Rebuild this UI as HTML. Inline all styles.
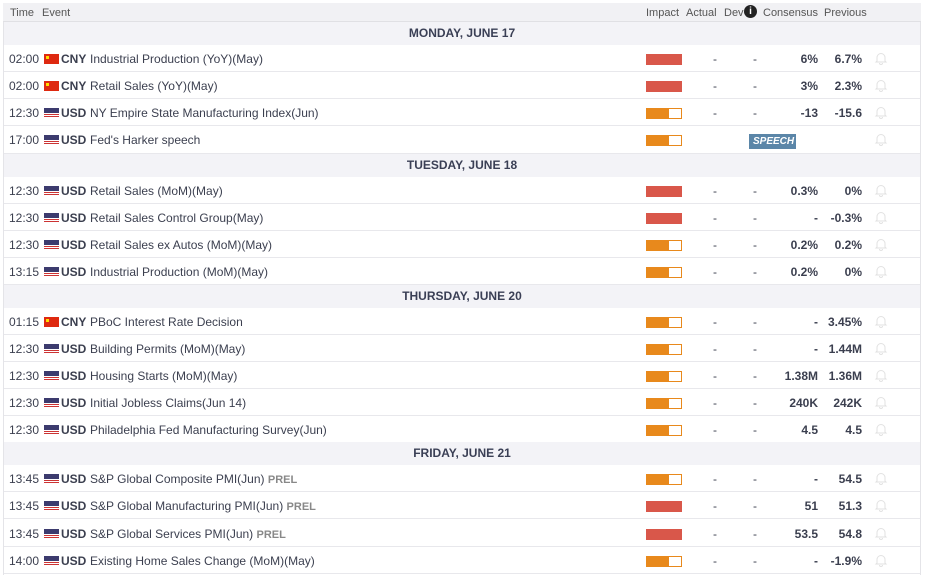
<!DOCTYPE html>
<html><head><meta charset="utf-8"><style>
*{margin:0;padding:0;box-sizing:border-box}
body{width:925px;height:575px;background:#fff;font-family:"Liberation Sans",Arial,sans-serif;font-size:12px;color:#3b3f4f;position:relative;overflow:hidden}
.wrap{position:absolute;left:3px;top:3px;width:918px;height:572px;border-left:1px solid #e4e4e8;border-right:1px solid #e4e4e8}
.hd{position:absolute;left:3px;top:3px;width:918px;height:19px;background:#f1f1f4;border-bottom:1px solid #e0e0e4;color:#555;font-size:11px}
.hd span{position:absolute;top:4px}
.day{position:absolute;left:4px;width:916px;height:23px;background:#f3f3f7;font-weight:bold;text-align:center;line-height:23px;color:#3a3f55;font-size:12px}
.row{position:absolute;left:4px;width:916px;height:27px;border-bottom:1px solid #e8e8ec}
.row span{position:absolute;top:7px;white-space:nowrap}
.t{left:5px}
.f{left:40px;top:9px!important;width:15px;height:10px}
.cn{background:#de2910}
.cn:after{content:"";position:absolute;left:2px;top:2px;width:3px;height:3px;background:#ffde00}
.us{background:repeating-linear-gradient(#c33 0 1px,#fff 1px 2px)}
.us:after{content:"";position:absolute;left:0;top:0;width:15px;height:5px;background:#3c3b6e}
.cur{left:57px;font-weight:bold}
.ev{left:86px}
.prel{color:#888;font-weight:bold;font-size:11px}
.imp{left:642px;top:9px!important;width:36px;height:11px}
.hi{background:#d9574a}
.md{background:linear-gradient(90deg,#e8891c 0 22px,#fff 22px);border:1px solid #e8891c}
.a{left:709px}.d{left:749px}
.c{right:102px;font-weight:bold;text-align:right}
.p{right:58px;font-weight:bold;text-align:right}
.b{left:870px;top:6px!important}
.sp{position:absolute;left:745px;top:8px!important;background:#5b86a8;color:#fff;font-weight:bold;font-style:italic;font-size:10px;padding:2px 4px;width:47px;height:15px}
</style></head><body>
<div class="wrap"></div>
<div class="hd"><span style="left:7px">Time</span><span style="left:39px">Event</span><span style="left:643px">Impact</span><span style="left:683px">Actual</span><span style="left:721px">Dev</span><span style="left:741px;top:2px;width:13px;height:13px;border-radius:50%;background:#222;color:#fff;font-size:10px;font-weight:bold;text-align:center;line-height:13px">i</span><span style="left:760px">Consensus</span><span style="left:821px">Previous</span></div>
<svg width="0" height="0" style="position:absolute"><symbol id="bell" viewBox="0 0 14 14"><path d="M3 10V6.5a4 4 0 0 1 8 0V10l1 1H2zM5.5 12a1.5 1.5 0 0 0 3 0" fill="none" stroke="#e2e2e2" stroke-width="1"/></symbol></svg>

<div class="day" style="top:22px">MONDAY, JUNE 17</div>
<div class="row" style="top:45px"><span class="t">02:00</span><span class="f cn"></span><span class="cur">CNY</span><span class="ev">Industrial Production (YoY)(May)</span><span class="imp hi"></span><span class="a">-</span><span class="d">-</span><span class="c">6%</span><span class="p">6.7%</span><span class="b"><svg width="14" height="14"><use href="#bell"/></svg></span></div>
<div class="row" style="top:72px"><span class="t">02:00</span><span class="f cn"></span><span class="cur">CNY</span><span class="ev">Retail Sales (YoY)(May)</span><span class="imp hi"></span><span class="a">-</span><span class="d">-</span><span class="c">3%</span><span class="p">2.3%</span><span class="b"><svg width="14" height="14"><use href="#bell"/></svg></span></div>
<div class="row" style="top:99px"><span class="t">12:30</span><span class="f us"></span><span class="cur">USD</span><span class="ev">NY Empire State Manufacturing Index(Jun)</span><span class="imp md"></span><span class="a">-</span><span class="d">-</span><span class="c">-13</span><span class="p">-15.6</span><span class="b"><svg width="14" height="14"><use href="#bell"/></svg></span></div>
<div class="row" style="top:126px;height:28px"><span class="t">17:00</span><span class="f us"></span><span class="cur">USD</span><span class="ev">Fed's Harker speech</span><span class="imp md"></span><span class="sp">SPEECH</span><span class="b"><svg width="14" height="14"><use href="#bell"/></svg></span></div>

<div class="day" style="top:154px">TUESDAY, JUNE 18</div>
<div class="row" style="top:177px"><span class="t">12:30</span><span class="f us"></span><span class="cur">USD</span><span class="ev">Retail Sales (MoM)(May)</span><span class="imp hi"></span><span class="a">-</span><span class="d">-</span><span class="c">0.3%</span><span class="p">0%</span><span class="b"><svg width="14" height="14"><use href="#bell"/></svg></span></div>
<div class="row" style="top:204px"><span class="t">12:30</span><span class="f us"></span><span class="cur">USD</span><span class="ev">Retail Sales Control Group(May)</span><span class="imp hi"></span><span class="a">-</span><span class="d">-</span><span class="c">-</span><span class="p">-0.3%</span><span class="b"><svg width="14" height="14"><use href="#bell"/></svg></span></div>
<div class="row" style="top:231px"><span class="t">12:30</span><span class="f us"></span><span class="cur">USD</span><span class="ev">Retail Sales ex Autos (MoM)(May)</span><span class="imp md"></span><span class="a">-</span><span class="d">-</span><span class="c">0.2%</span><span class="p">0.2%</span><span class="b"><svg width="14" height="14"><use href="#bell"/></svg></span></div>
<div class="row" style="top:258px"><span class="t">13:15</span><span class="f us"></span><span class="cur">USD</span><span class="ev">Industrial Production (MoM)(May)</span><span class="imp md"></span><span class="a">-</span><span class="d">-</span><span class="c">0.2%</span><span class="p">0%</span><span class="b"><svg width="14" height="14"><use href="#bell"/></svg></span></div>

<div class="day" style="top:285px">THURSDAY, JUNE 20</div>
<div class="row" style="top:308px"><span class="t">01:15</span><span class="f cn"></span><span class="cur">CNY</span><span class="ev">PBoC Interest Rate Decision</span><span class="imp md"></span><span class="a">-</span><span class="d">-</span><span class="c">-</span><span class="p">3.45%</span><span class="b"><svg width="14" height="14"><use href="#bell"/></svg></span></div>
<div class="row" style="top:335px"><span class="t">12:30</span><span class="f us"></span><span class="cur">USD</span><span class="ev">Building Permits (MoM)(May)</span><span class="imp md"></span><span class="a">-</span><span class="d">-</span><span class="c">-</span><span class="p">1.44M</span><span class="b"><svg width="14" height="14"><use href="#bell"/></svg></span></div>
<div class="row" style="top:362px"><span class="t">12:30</span><span class="f us"></span><span class="cur">USD</span><span class="ev">Housing Starts (MoM)(May)</span><span class="imp md"></span><span class="a">-</span><span class="d">-</span><span class="c">1.38M</span><span class="p">1.36M</span><span class="b"><svg width="14" height="14"><use href="#bell"/></svg></span></div>
<div class="row" style="top:389px"><span class="t">12:30</span><span class="f us"></span><span class="cur">USD</span><span class="ev">Initial Jobless Claims(Jun 14)</span><span class="imp md"></span><span class="a">-</span><span class="d">-</span><span class="c">240K</span><span class="p">242K</span><span class="b"><svg width="14" height="14"><use href="#bell"/></svg></span></div>
<div class="row" style="top:416px"><span class="t">12:30</span><span class="f us"></span><span class="cur">USD</span><span class="ev">Philadelphia Fed Manufacturing Survey(Jun)</span><span class="imp md"></span><span class="a">-</span><span class="d">-</span><span class="c">4.5</span><span class="p">4.5</span><span class="b"><svg width="14" height="14"><use href="#bell"/></svg></span></div>

<div class="day" style="top:442px">FRIDAY, JUNE 21</div>
<div class="row" style="top:465px"><span class="t">13:45</span><span class="f us"></span><span class="cur">USD</span><span class="ev">S&amp;P Global Composite PMI(Jun) <b class="prel">PREL</b></span><span class="imp md"></span><span class="a">-</span><span class="d">-</span><span class="c">-</span><span class="p">54.5</span><span class="b"><svg width="14" height="14"><use href="#bell"/></svg></span></div>
<div class="row" style="top:492px"><span class="t">13:45</span><span class="f us"></span><span class="cur">USD</span><span class="ev">S&amp;P Global Manufacturing PMI(Jun) <b class="prel">PREL</b></span><span class="imp hi"></span><span class="a">-</span><span class="d">-</span><span class="c">51</span><span class="p">51.3</span><span class="b"><svg width="14" height="14"><use href="#bell"/></svg></span></div>
<div class="row" style="top:520px"><span class="t">13:45</span><span class="f us"></span><span class="cur">USD</span><span class="ev">S&amp;P Global Services PMI(Jun) <b class="prel">PREL</b></span><span class="imp hi"></span><span class="a">-</span><span class="d">-</span><span class="c">53.5</span><span class="p">54.8</span><span class="b"><svg width="14" height="14"><use href="#bell"/></svg></span></div>
<div class="row" style="top:547px"><span class="t">14:00</span><span class="f us"></span><span class="cur">USD</span><span class="ev">Existing Home Sales Change (MoM)(May)</span><span class="imp md"></span><span class="a">-</span><span class="d">-</span><span class="c">-</span><span class="p">-1.9%</span><span class="b"><svg width="14" height="14"><use href="#bell"/></svg></span></div>
</body></html>
